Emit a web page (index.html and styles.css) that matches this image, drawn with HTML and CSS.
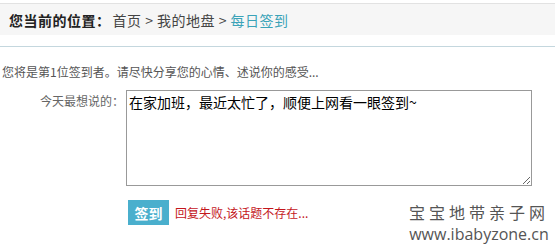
FILE: index.html
```html
<!DOCTYPE html>
<html lang="zh-CN">
<head>
<meta charset="utf-8">
<title>每日签到</title>
<link rel="stylesheet" href="styles.css">
</head>
<body>
<div class="crumb">
  <span class="crumb-title">您当前的位置：</span>
  <span class="crumb-path">首页 &gt; 我的地盘 &gt; <a class="crumb-cur" href="#">每日签到</a></span>
</div>
<div class="content">
  <p class="intro">您将是第1位签到者。请尽快分享您的心情、述说你的感受...</p>
  <div class="form-row">
    <label class="label" for="msg">今天最想说的：</label>
    <textarea id="msg" class="msg">在家加班，最近太忙了，顺便上网看一眼签到~</textarea>
  </div>
  <div class="actions">
    <button class="btn" type="button">签到</button>
    <span class="error">回复失败,该话题不存在...</span>
  </div>
</div>
<div class="watermark">
  <div class="wm-cn">宝宝地带亲子网</div>
  <div class="wm-url">www.ibabyzone.cn</div>
</div>
</body>
</html>
```
FILE: styles.css
```css
* { box-sizing: border-box; }
html, body {
  margin: 0;
  padding: 0;
  background: #fff;
  font-family: "Noto Sans CJK SC", "Liberation Sans", sans-serif;
  color: #333;
  width: 555px;
  height: 246px;
  overflow: hidden;
  position: relative;
}
.crumb {
  margin-top: 3px;
  border-top: 1px solid #e2e2e2;
  background: #f6f6f6;
  height: 32px;
  display: flex;
  align-items: center;
  padding-left: 9px;
  font-size: 14px;
  line-height: 20px;
  letter-spacing: 0.5px;
}
.crumb-title {
  font-weight: bold;
  color: #222;
}
.crumb-path {
  color: #444;
  margin-left: 2px;
}
.crumb-cur {
  color: #3aa3b8;
  text-decoration: none;
}
.content {
  margin-top: 11px;
  border-top: 1px solid #c4d7de;
}
.intro {
  margin: 17px 0 0 2px;
  font-size: 12px;
  line-height: 16px;
  color: #555;
}
.form-row {
  display: flex;
  align-items: flex-start;
  margin-top: 10px;
}
.label {
  width: 124px;
  text-align: right;
  font-size: 12px;
  line-height: 18px;
  padding-top: 2px;
  color: #666;
}
.msg {
  margin-left: 2px;
  width: 406px;
  height: 96px;
  border: 1px solid #999;
  padding: 1px 2px;
  font-family: "Noto Sans CJK SC", "Liberation Sans", sans-serif;
  font-size: 14px;
  line-height: 20px;
  color: #000;
  resize: both;
}
.actions {
  display: flex;
  align-items: center;
  margin-top: 14px;
  padding-left: 128px;
}
.btn {
  background: #4aafcd;
  color: #fff;
  border: none;
  width: 41px;
  height: 25px;
  font-family: "Noto Sans CJK SC", sans-serif;
  font-size: 14px;
  font-weight: bold;
  padding: 0;
}
.error {
  margin-left: 6px;
  font-size: 12px;
  color: #c4161c;
}
.watermark {
  position: absolute;
  right: 6px;
  bottom: 4px;
  display: flex;
  flex-direction: column;
  align-items: center;
  gap: 6px;
  color: #555;
}
.wm-cn {
  font-size: 16px;
  letter-spacing: 4px;
  line-height: 16px;
}
.wm-url {
  font-family: "Open Sans", "Liberation Sans", sans-serif;
  font-size: 16px;
  line-height: 16px;
}
```
